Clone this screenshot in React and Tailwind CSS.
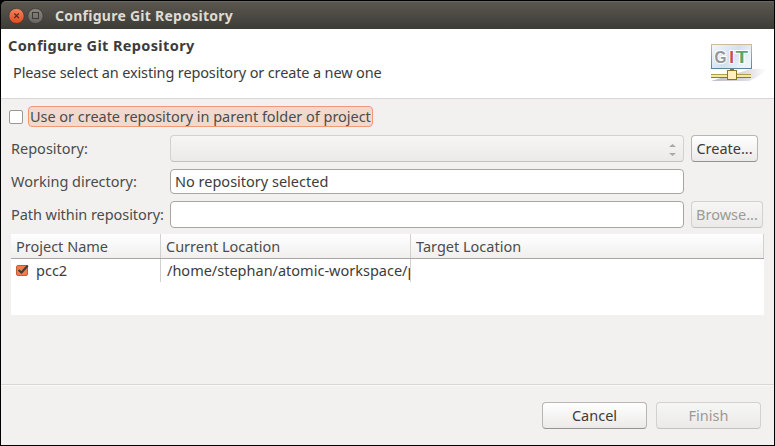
import React from "react";

function Field({ children, className = "" }) {
  return (
    <div className={`flex w-[514px] items-center rounded-[4px] border border-[#aaa69f] bg-white pb-[2px] pl-1 text-[#3c3c3c] ${className}`}>
      {children}
    </div>
  );
}

function Button({ children, disabled = false, className = "" }) {
  const tone = disabled
    ? "border-[#d3d0cd] border-b-[#c3c0bd] from-[#f6f6f5] to-[#ebeae9] text-[#9c9a98]"
    : "border-[#b9b5b0] border-b-[#96928d] from-white to-[#ebeae8] text-[#3c3c3c]";
  return (
    <button className={`flex h-[27px] shrink-0 items-center justify-center rounded-[4px] border bg-linear-to-b pb-[2px] ${tone} ${className}`}>
      {children}
    </button>
  );
}

function GitBanner() {
  return (
    <svg className="mt-[15px] mr-[5px] h-[42px] w-[60px]" viewBox="0 0 60 42">
      <defs>
        <linearGradient id="screen" x1="0" y1="0" x2="1" y2="0.5">
          <stop offset="0" stopColor="#f3f7fc" />
          <stop offset=".6" stopColor="#d3e0f0" />
          <stop offset="1" stopColor="#eef5fa" />
        </linearGradient>
        <linearGradient id="frame" x1="0" y1="0" x2="0" y2="1">
          <stop offset="0" stopColor="#c9bd9a" />
          <stop offset="1" stopColor="#5d8497" />
        </linearGradient>
        <linearGradient id="shade" x1="0" y1="0" x2="1" y2="0">
          <stop offset="0" stopColor="#bfb9c8" />
          <stop offset=".6" stopColor="#dcd8e0" />
          <stop offset="1" stopColor="#fff" />
        </linearGradient>
      </defs>
      <path d="M2 37 L42 25 L58 25 Q52 32 40 37 Z" fill="url(#shade)" />
      <rect x="2.5" y=".5" width="40" height="24" fill="url(#screen)" stroke="url(#frame)" />
      <g fontFamily="Liberation Sans, sans-serif" fontSize="17" fontWeight="700" stroke="#fff" strokeWidth="2" paintOrder="stroke">
        <text x="5.5" y="19" fill="#959595" textLength="12" lengthAdjust="spacingAndGlyphs">G</text>
        <text x="20.2" y="19" fill="#c64b55">I</text>
        <text x="26.5" y="19" fill="#58a869" textLength="12.5" lengthAdjust="spacingAndGlyphs">T</text>
      </g>
      <path d="M2 30.5H42" stroke="#aaa04e" />
      <path d="M2 32H42" stroke="#f2eaa2" strokeWidth="2" />
      <path d="M2 33.5H42" stroke="#8b7b20" />
      <path d="M21 25h4v2h-4z" fill="#8b7b20" />
      <rect x="18.5" y="26.5" width="9" height="9" fill="#ffefbd" stroke="#8b7725" />
    </svg>
  );
}

export default function App() {
  return (
    <div className="flex h-[446px] w-[775px] flex-col border border-black bg-[#f2f1f0] font-['Noto_Sans','Open_Sans',sans-serif] text-[14.5px] leading-[20px] whitespace-nowrap text-[#4c4c4c]">
      <div className="shrink-0 bg-black">
      <header className="flex h-7 items-center rounded-tl-[5px] border-t border-[#6a675e] bg-linear-to-b from-[#5a574f] to-[#3d3c37] pl-[7px]">
        <svg className="h-4 w-[36px]" viewBox="0 0 36 16">
          <defs>
            <linearGradient id="close" x1="0" y1="0" x2="0" y2="1">
              <stop offset="0" stopColor="#f58560" />
              <stop offset="1" stopColor="#df4b1c" />
            </linearGradient>
            <linearGradient id="max" x1="0" y1="0" x2="0" y2="1">
              <stop offset="0" stopColor="#89877e" />
              <stop offset="1" stopColor="#66645d" />
            </linearGradient>
          </defs>
          <circle cx="8.5" cy="8" r="7.6" fill="url(#close)" stroke="#35332e" strokeWidth=".6" />
          <path d="M6.3 5.5l4.5 4.5M10.8 5.5l-4.5 4.5" stroke="#51301f" strokeWidth="1.2" />
          <circle cx="27.5" cy="8" r="7.6" fill="url(#max)" stroke="#35332e" strokeWidth=".6" />
          <rect x="24.5" y="4.5" width="6" height="6" fill="none" stroke="#3b3a36" />
        </svg>
        <h1 className="ml-[11px] text-[14px] font-bold tracking-[0.26px] text-[#dfdbd2]">Configure Git Repository</h1>
      </header>
      </div>

      <section className="flex h-[70px] shrink-0 justify-between border-b border-[#d8d7d6] bg-white text-[#3c3c3c]">
        <div className="pt-[6px] pl-[7px]">
          <h2 className="text-[14.5px] font-bold tracking-[0.36px]">Configure Git Repository</h2>
          <p className="mt-[7px] pl-[5px] tracking-[-0.14px]">Please select an existing repository or create a new one</p>
        </div>
        <GitBanner />
      </section>

      <main className="flex h-[286px] shrink-0 flex-col border-b border-[#d8d7d6] pl-2.5">
        <label className="mt-[7px] -ml-[2px] flex h-[21px] items-center">
          <span className="size-[14px] rounded-[2px] border border-[#9c9893] bg-white" />
          <span className="ml-[5px] flex h-[21px] w-[345px] items-center rounded-[4px] border border-[#f09a75] bg-[#f1d9cf] pb-[2px] pl-[1px] tracking-[-0.03px]">
            Use or create repository in parent folder of project
          </span>
        </label>
        <div className="mt-2 flex h-[27px] items-center">
          <span className="w-[159px] pb-[2px]">Repository:</span>
          <div className="flex h-[27px] w-[514px] items-center justify-end rounded-[4px] border border-[#d3d0cd] border-b-[#c3c0bd] bg-linear-to-b from-[#f6f6f5] to-[#ebeae9] pr-[7px]">
            <svg className="mt-[2px] h-3 w-[7px]" viewBox="0 0 7 12">
              <path d="M0 3L3.5 0 7 3zM0 9L3.5 12 7 9z" fill="#aaa8a6" />
            </svg>
          </div>
          <Button className="ml-[7px] w-[67px]">Create...</Button>
        </div>
        <div className="mt-[7px] flex h-[25px] items-center">
          <span className="w-[159px] pb-[2px]">Working directory:</span>
          <Field className="h-[25px]">No repository selected</Field>
        </div>
        <div className="mt-[7px] flex h-[27px] items-center">
          <span className="w-[159px] pb-[2px] tracking-[-0.06px]">Path within repository:</span>
          <Field className="h-[27px]" />
          <Button disabled className="ml-[7px] w-[72px]">Browse...</Button>
        </div>
        <div className="mt-[6px] h-[81px] w-[753px] bg-white">
          <div className="grid h-[25px] grid-cols-[150px_250px_353px] border-b border-[#aaa8a5] bg-linear-to-b from-white to-[#f0efee]">
            <div className="flex items-center border-r border-[#d3d1cf] pl-[5px]">Project Name</div>
            <div className="flex items-center border-r border-[#d3d1cf] pl-[5px]">Current Location</div>
            <div className="flex items-center border-r border-[#d3d1cf] pl-[5px]">Target Location</div>
          </div>
          <div className="grid h-[23px] grid-cols-[150px_250px_353px] text-[#3c3c3c]">
            <div className="flex items-center border-r border-[#d3d1cf] pb-[1px] pl-[5px]">
              <svg className="h-3 w-[13px]" viewBox="0 0 13 12">
                <rect x=".5" y="1.5" width="11" height="10" rx="1.5" fill="#f27b50" stroke="#c95a33" />
                <path d="M2.5 6L5.5 8.5 11.8 1.5" fill="none" stroke="#3c3c3c" strokeWidth="2" />
              </svg>
              <span className="ml-[7px]">pcc2</span>
            </div>
            <div className="flex items-center overflow-hidden border-r border-[#d3d1cf] pb-[1px] pl-[6px]">/home/stephan/atomic-workspace/pcc2</div>
            <div />
          </div>
        </div>
      </main>

      <footer className="flex flex-1 justify-end gap-[9px] border-t border-[#f9f9f8] pt-4 pr-[13px]">
        <Button className="w-[105px]">Cancel</Button>
        <Button disabled className="w-[105px]">Finish</Button>
      </footer>
    </div>
  );
}
